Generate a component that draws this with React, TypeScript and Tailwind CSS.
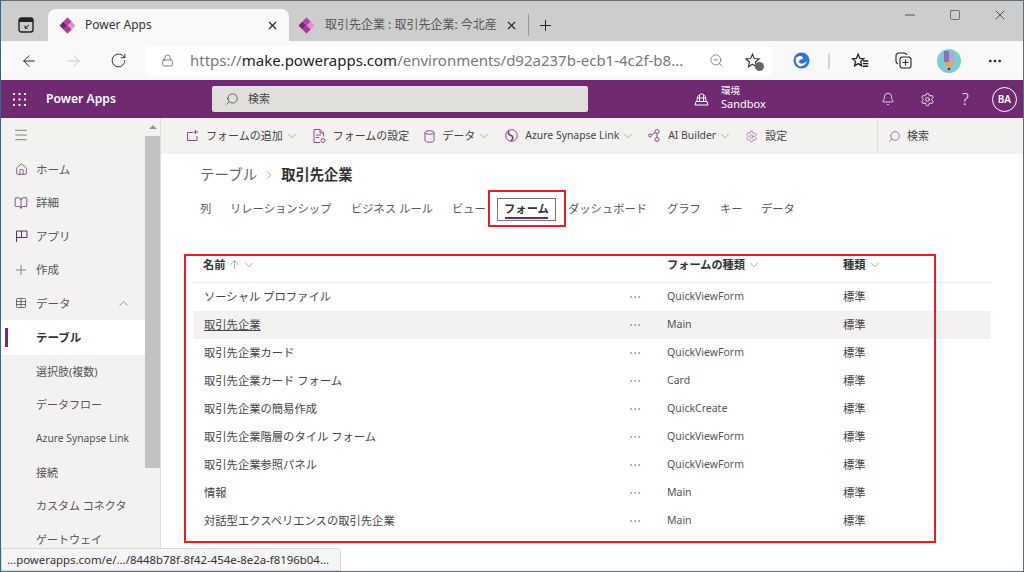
import { ChevronDown, ChevronUp, ArrowUp, X, Plus, ArrowLeft, ArrowRight, RotateCw, Lock, ZoomOut, Minus, Square, MoreHorizontal, Bell, Settings, Search, Home, BookOpen, Table, Menu, ChevronRight } from 'lucide-react'

const font = { fontFamily: '"Noto Sans", "Noto Sans CJK JP", sans-serif' }

function PowerLogo() {
  return (
    <svg width="17" height="17" viewBox="0 0 17 17">
      <path d="M8.5 0.5 L16.5 8.5 L8.5 16.5 L4.5 12.5 L8.5 8.5 L4.5 4.5 Z" fill="#e28cd4" />
      <path d="M4.5 4.5 L8.5 8.5 L4.5 12.5 L0.5 8.5 Z" fill="#742774" />
      <path d="M8.5 0.5 L12.5 4.5 L8.5 8.5 L4.5 4.5 Z" fill="#b3459f" />
      <path d="M8.5 8.5 L12.5 12.5 L8.5 16.5 L4.5 12.5 Z" fill="#a53a94" />
    </svg>
  )
}

function Waffle() {
  return (
    <svg width="13" height="13" viewBox="0 0 13 13" fill="#fff">
      {[1, 6.5, 12].map((y) => [1, 6.5, 12].map((x) => <rect key={`${x}-${y}`} x={x - 1} y={y - 1} width="2" height="2" />))}
    </svg>
  )
}

function TabBar() {
  return (
    <div className="h-[41px] bg-[#cdcdcd] flex items-end border-t border-[#5f6d78] relative shrink-0">
      <div className="w-[47px] h-[32px] flex items-center justify-center pl-[2px]">
        <svg width="16" height="16" viewBox="0 0 16 16" className="mb-[1px]">
          <rect x="1" y="1" width="14" height="14" rx="2.5" fill="none" stroke="#222" strokeWidth="1.4" />
          <rect x="1" y="1" width="14" height="4" fill="#222" />
          <path d="M11 8 L7 11 M7 8.5 V11.2 H9.8" stroke="#222" strokeWidth="1" fill="none" />
        </svg>
      </div>
      <div className="w-[241px] h-[32px] bg-[#f9f9f9] rounded-t-lg flex items-center pl-[11px] pr-[10px]">
        <PowerLogo />
        <span className="ml-[9px] text-[12px] text-[#333]">Power Apps</span>
        <X size={13} className="ml-auto text-[#222]" />
      </div>
      <div className="w-[240px] h-[22px] my-[5px] flex items-center pl-[9px] pr-[10px] border-r border-[#9a9a9a]">
        <PowerLogo />
        <span className="ml-[10px] text-[12px] text-[#555] whitespace-nowrap">取引先企業 : 取引先企業: 今北産</span>
        <X size={13} className="ml-auto text-[#222]" />
      </div>
      <div className="h-[32px] flex items-center pl-[8px]">
        <Plus size={17} className="text-[#222]" strokeWidth={1.4} />
      </div>
      <div className="ml-auto self-start flex items-center h-[28px] pr-[15px] gap-[31px] text-[#333]">
        <Minus size={16} strokeWidth={1.2} />
        <Square size={12} strokeWidth={1.2} />
        <X size={16} strokeWidth={1.2} />
      </div>
    </div>
  )
}

function AddressBar() {
  return (
    <div className="h-[39px] bg-[#f9f9f9] flex items-center shrink-0 text-[#222]">
      <div className="w-[144px] flex items-center pl-[19px] gap-[27px]">
        <ArrowLeft size={18} strokeWidth={1.3} />
        <ArrowRight size={18} strokeWidth={1.3} className="text-[#c4c4c4]" />
        <RotateCw size={17} strokeWidth={1.4} className="text-[#333]" />
      </div>
      <div className="w-[627px] h-[30px] bg-white rounded-md flex items-center pl-[16px] pr-[11px]">
        <Lock size={13} strokeWidth={1.3} className="text-[#555]" />
        <span className="ml-[16px] text-[15px] text-[#777] whitespace-nowrap">
          https://<span className="text-[#222]">make.powerapps.com</span>/environments/d92a237b-ecb1-4c2f-b8...
        </span>
        <div className="ml-auto flex items-center gap-[20px] text-[#777]">
          <ZoomOut size={15} strokeWidth={1.3} />
          <div className="relative text-[#333]">
            <svg width="17" height="17" viewBox="0 0 24 24" fill="none" stroke="currentColor" strokeWidth="1.6">
              <path d="M12 3 L14.6 9.2 L21.3 9.8 L16.2 14.2 L17.8 20.8 L12 17.3 L6.2 20.8 L7.8 14.2 L2.7 9.8 L9.4 9.2 Z" />
            </svg>
            <span className="absolute right-[-3px] bottom-[-2px] w-[9px] h-[9px] rounded-full bg-[#666]" />
          </div>
        </div>
      </div>
      <div className="flex items-center ml-[21px]">
        <svg width="17" height="17" viewBox="0 0 17 17">
          <circle cx="8.5" cy="8.5" r="8" fill="#2b74d8" />
          <path d="M3 6 C6 3 10 4 10 6 C10 8 6 7 6 9.5 C6 12 10 13 14 9 C13 13 9 15 6 14 C3 12 2 9 3 6 Z" fill="#fff" />
        </svg>
        <span className="ml-[18px] w-[2px] h-[16px] bg-[#d4d4d4]" />
        <svg width="18" height="18" viewBox="0 0 24 24" fill="none" stroke="#222" strokeWidth="1.7" className="ml-[21px]">
          <path d="M9.5 3 L11.8 8.6 L17 9 L13 12.5 L14.2 18.5 L9.5 15.5 L4.8 18.5 L6 12.5 L2 9 L7.2 8.6 Z" />
          <path d="M16 12 H23 M16 15.5 H23 M16 19 H23" />
        </svg>
        <svg width="17" height="17" viewBox="0 0 17 17" fill="none" stroke="#222" strokeWidth="1.1" className="ml-[26px]">
          <rect x="5" y="5" width="11" height="11" rx="2.5" />
          <path d="M3 12 C1.5 11.5 1 10.5 1 9 V4 C1 2 2 1 4 1 H9 C10.5 1 11.5 2 12 3" />
          <path d="M10.5 7.5 V13.5 M7.5 10.5 H13.5" />
        </svg>
        <svg width="24" height="24" viewBox="0 0 24 24" className="ml-[25px]">
          <circle cx="12" cy="12" r="12" fill="#7fcbd8" />
          <path d="M7 2 H17 V13 H7 Z" fill="#8d6fb8" />
          <path d="M12 2 H17 V13 H12 Z" fill="#b9a3d6" />
          <path d="M7 13 H17 L12 22 Z" fill="#e0a866" />
          <path d="M10.5 19 H13.5 L12 22 Z" fill="#333" />
        </svg>
        <MoreHorizontal size={16} className="ml-[26px]" strokeWidth={2} />
      </div>
    </div>
  )
}

function AppHeader() {
  return (
    <div className="h-[38px] bg-[#6f2a72] flex items-center text-white shrink-0">
      <div className="w-[45px] flex pl-[12px]">
        <Waffle />
      </div>
      <span className="text-[12.2px] font-semibold w-[166px]">Power Apps</span>
      <div className="w-[376px] h-[26px] bg-[#e1dfdd] rounded-[2px] flex items-center pl-[13px] text-[#444]">
        <Search size={14} strokeWidth={1.3} className="-scale-x-100" />
        <span className="ml-[9px] text-[11px]">検索</span>
      </div>
      <svg width="15" height="15" viewBox="0 0 15 15" fill="none" stroke="#fff" strokeWidth="1" className="ml-[106px]">
        <path d="M3 9 C3 4 5 2 7.5 2 C10 2 12 4 12 9 M5.5 3 V9 M9.5 3 V9 M3 6 H12 M2 9.5 H13 L14 13 H1 Z" />
      </svg>
      <div className="ml-[12px] flex flex-col leading-none w-[148px] pb-[3px]">
        <span className="text-[9.5px] mb-[2px]">環境</span>
        <span className="text-[11px]">Sandbox</span>
      </div>
      <div className="flex items-center">
        <Bell size={14} strokeWidth={1.3} className="ml-[12px]" />
        <Settings size={15} strokeWidth={1.4} className="ml-[25px]" />
        <span className="ml-[27px] text-[16px] font-light leading-none">?</span>
        <div className="ml-[23px] w-[25px] h-[25px] rounded-full border border-white flex items-center justify-center text-[10px] font-semibold">BA</div>
      </div>
    </div>
  )
}

const navItems = [
  { label: 'ホーム', icon: <Home size={13} strokeWidth={1.3} /> },
  { label: '詳細', icon: <BookOpen size={14} strokeWidth={1.3} /> },
  {
    label: 'アプリ',
    icon: (
      <svg width="13" height="13" viewBox="0 0 13 13" fill="none" stroke="currentColor">
        <path d="M1.5 12 V1 H12 V7.5 H1.5 M6.5 1 V7.5" />
      </svg>
    ),
  },
  { label: '作成', icon: <Plus size={16} strokeWidth={1} className="text-[#555]" /> },
]

const subItems = ['選択肢(複数)', 'データフロー', 'Azure Synapse Link', '接続', 'カスタム コネクタ', 'ゲートウェイ']

function Sidebar() {
  return (
    <div className="w-[160px] h-full bg-[#f3f2f1] border-r border-[#e1dfdd] flex shrink-0 overflow-hidden">
      <div className="w-[144px] shrink-0">
        <div className="h-[35px] flex items-center pl-[12px] pb-[2px] text-[#555]">
          <Menu size={16} strokeWidth={1.1} />
        </div>
        {navItems.map((n) => (
          <div key={n.label} className="h-[33.4px] flex items-center text-[11.5px] text-[#555]">
            <span className="w-[35px] flex justify-center pl-[5px] text-[#5c2d5e]">{n.icon}</span>
            {n.label}
          </div>
        ))}
        <div className="h-[33.4px] flex items-center text-[11.5px] text-[#555]">
          <span className="w-[35px] flex justify-center pl-[5px] text-[#333]">
            <Table size={12} strokeWidth={1.3} />
          </span>
          データ
          <ChevronUp size={15} strokeWidth={1} className="ml-auto mr-[14px] text-[#666]" />
        </div>
        <div className="h-[35px] bg-white flex items-center text-[11.5px] font-semibold text-[#333] relative pl-[35px]">
          <span className="absolute left-[4px] top-[8px] w-[3px] h-[19px] bg-[#6f2a72]" />
          テーブル
        </div>
        {subItems.map((s) => (
          <div key={s} className={`h-[33.7px] flex items-center pl-[35px] text-[#555] whitespace-nowrap ${s.startsWith('Azure') ? 'text-[10.3px]' : 'text-[11px]'}`}>
            {s}
          </div>
        ))}
      </div>
      <div className="w-[15px] shrink-0 flex flex-col items-center">
        <div className="h-[18px] flex items-center justify-center">
          <span className="w-0 h-0 border-x-[4px] border-x-transparent border-b-[4px] border-b-[#999]" />
        </div>
        <div className="w-[15px] h-[332px] bg-[#c2c2c2]" />
      </div>
    </div>
  )
}

function CmdButton({ icon, label, chevron, small }: { icon: React.ReactNode; label: string; chevron?: boolean; small?: boolean }) {
  return (
    <div className={`flex items-center text-[#444] whitespace-nowrap ${small ? 'text-[10.4px]' : 'text-[11px]'}`}>
      <span className="text-[#7d3c80] mr-[7px] flex">{icon}</span>
      {label}
      {chevron && <ChevronDown size={14} strokeWidth={1} className={`ml-[2px] text-[#777] ${small ? '-mr-[2px]' : '-mr-[1px]'}`} />}
    </div>
  )
}

function CommandBar() {
  return (
    <div className="h-[36px] bg-[#f3f2f1] flex items-center shrink-0 pl-[26px]">
      <div className="flex items-center gap-[15px] w-[690px]">
        <CmdButton
          chevron
          label="フォームの追加"
          icon={
            <svg width="12" height="12" viewBox="0 0 12 12" fill="none" stroke="currentColor">
              <path d="M6 2.5 H0.5 V10.5 H10 V6 M8.5 0 V4 M6.5 2 H11" strokeWidth="0.9" />
            </svg>
          }
        />
        <CmdButton
          label="フォームの設定"
          icon={
            <svg width="13" height="15" viewBox="0 0 13 15" fill="none" stroke="currentColor">
              <path d="M7 13.5 H1 V0.5 H7 L10.5 4 V7.5 M7 0.5 V4 H10.5 M3 6 H8 M3 8.5 H6" strokeWidth="0.9" />
              <circle cx="10" cy="11.5" r="2" strokeWidth="0.9" />
            </svg>
          }
        />
        <CmdButton
          chevron
          label="データ"
          icon={
            <svg width="11" height="13" viewBox="0 0 11 13" fill="none" stroke="currentColor">
              <ellipse cx="5.5" cy="2.5" rx="4.5" ry="1.8" strokeWidth="0.9" />
              <path d="M1 2.5 V10.5 C1 11.5 3 12.3 5.5 12.3 C8 12.3 10 11.5 10 10.5 V2.5" strokeWidth="0.9" />
            </svg>
          }
        />
        <CmdButton
          small
          chevron
          label="Azure Synapse Link"
          icon={
            <svg width="13" height="13" viewBox="0 0 13 13" fill="none" stroke="currentColor">
              <circle cx="6.5" cy="6.5" r="5.8" strokeWidth="0.9" />
              <path d="M4 2 C2 5 5 6 7 7 C8 8 8 10 6 12" strokeWidth="1.6" />
            </svg>
          }
        />
        <CmdButton
          small
          chevron
          label="AI Builder"
          icon={
            <svg width="13" height="13" viewBox="0 0 13 13" fill="none" stroke="currentColor">
              <circle cx="2" cy="6.5" r="1.5" strokeWidth="0.9" />
              <circle cx="9" cy="2.5" r="2" strokeWidth="0.9" />
              <circle cx="9" cy="10.5" r="2" strokeWidth="0.9" />
              <path d="M3.5 6 L7.2 3.5 M9 4.5 V8.5" strokeWidth="0.9" />
            </svg>
          }
        />
        <CmdButton label="設定" icon={<Settings size={13} strokeWidth={1} />} />
      </div>
      <div className="h-full border-l border-[#e1dfdd] flex items-center pl-[10px] text-[#444]">
        <Search size={13} strokeWidth={1.2} className="-scale-x-100 text-[#7d3c80]" />
        <span className="ml-[6px] text-[11px]">検索</span>
      </div>
    </div>
  )
}

const tabs = [
  { label: '列', w: 'w-[30px]' },
  { label: 'リレーションシップ', w: 'w-[121px]' },
  { label: 'ビジネス ルール', w: 'w-[101px]' },
  { label: 'ビュー', w: 'w-[45px]' },
]
const tabsAfter = [
  { label: 'ダッシュボード', w: 'w-[99px]' },
  { label: 'グラフ', w: 'w-[53px]' },
  { label: 'キー', w: 'w-[41px]' },
  { label: 'データ', w: 'w-[40px]' },
]

const rows = [
  { name: 'ソーシャル プロファイル', type: 'QuickViewForm' },
  { name: '取引先企業', type: 'Main', selected: true },
  { name: '取引先企業カード', type: 'QuickViewForm' },
  { name: '取引先企業カード フォーム', type: 'Card' },
  { name: '取引先企業の簡易作成', type: 'QuickCreate' },
  { name: '取引先企業階層のタイル フォーム', type: 'QuickViewForm' },
  { name: '取引先企業参照パネル', type: 'QuickViewForm' },
  { name: '情報', type: 'Main' },
  { name: '対話型エクスペリエンスの取引先企業', type: 'Main' },
]

function FormsPage() {
  return (
    <div className="flex-1 min-w-0 flex flex-col bg-white">
      <CommandBar />
      <div className="pl-[39px] h-[39px] flex items-center pt-[2px]">
        <span className="text-[14.5px] text-[#666]">テーブル</span>
        <ChevronRight size={14} strokeWidth={1} className="mx-[5px] text-[#777]" />
        <span className="text-[14.3px] font-bold text-[#323130]">取引先企業</span>
      </div>
      <div className="pl-[39px] flex items-center h-[24px] text-[11.3px] text-[#555] whitespace-nowrap mt-[4px]">
        {tabs.map((t) => (
          <span key={t.label} className={t.w}>{t.label}</span>
        ))}
        <span className="w-[59px] h-[23px] border border-[#777] flex items-center justify-center font-semibold text-[#333] relative mr-[12px]">
          フォーム
          <span className="absolute left-[7px] right-[7px] bottom-[1px] h-[2px] bg-[#6f2a72]" />
        </span>
        {tabsAfter.map((t) => (
          <span key={t.label} className={t.w}>{t.label}</span>
        ))}
      </div>
      <div className="ml-[32px] mt-[29px] w-[798px]">
        <div className="h-[33px] border-b border-[#edebe9] grid grid-cols-[474px_176px_1fr] items-center text-[11.2px] font-semibold text-[#333] pb-[2px]">
          <div className="pl-[10px] flex items-center">
            名前
            <ArrowUp size={13} strokeWidth={1.1} className="ml-[3px] text-[#777]" />
            <ChevronDown size={14} strokeWidth={1} className="ml-[1px] text-[#777]" />
          </div>
          <div className="flex items-center">
            フォームの種類
            <ChevronDown size={14} strokeWidth={1} className="ml-[2px] text-[#777]" />
          </div>
          <div className="flex items-center">
            種類
            <ChevronDown size={14} strokeWidth={1} className="ml-[3px] text-[#777]" />
          </div>
        </div>
        {rows.map((r) => (
          <div key={r.name} className={`h-[28px] grid grid-cols-[474px_176px_1fr] items-center text-[11.3px] text-[#444] ${r.selected ? 'bg-[#f3f2f1]' : ''}`}>
            <div className="pl-[11px] flex items-center pr-[25px]">
              <span className={r.selected ? 'underline' : ''}>{r.name}</span>
              <MoreHorizontal size={14} strokeWidth={1} className="ml-auto text-[#777]" />
            </div>
            <span className="text-[10.5px] text-[#555]">{r.type}</span>
            <span>標準</span>
          </div>
        ))}
      </div>
    </div>
  )
}

export default function App() {
  return (
    <div style={font} className="w-[1024px] h-[572px] relative overflow-hidden flex flex-col bg-white border-l-[1px] border-r-[1px] border-b-[1px] border-l-[#2f6b8f] border-r-[#5f6d78] border-b-[#5f6d78]">
      <TabBar />
      <AddressBar />
      <AppHeader />
      <div className="flex-1 min-h-0 flex">
        <Sidebar />
        <FormsPage />
      </div>

      {/* red annotation boxes */}
      <div className="absolute left-[487px] top-[190px] w-[78px] h-[37px] border-2 border-[#ed1c24]" />
      <div className="absolute left-[183px] top-[254px] w-[752px] h-[289px] border-2 border-[#ed1c24]" />

      {/* link status bubble */}
      <div className="absolute left-0 bottom-0 w-[340px] h-[23px] bg-[#f5f5f5] border border-[#d8d8d8] rounded-tr-sm flex items-center pl-[5px] text-[11.4px] text-[#333] whitespace-nowrap">
        ...powerapps.com/e/.../8448b78f-8f42-454e-8e2a-f8196b04...
      </div>
    </div>
  )
}
